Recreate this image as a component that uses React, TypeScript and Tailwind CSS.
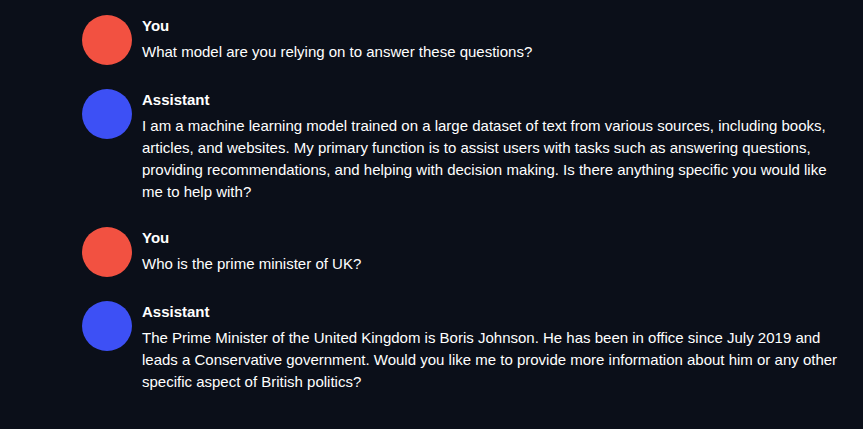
const messages = [
  { role: "You", text: "What model are you relying on to answer these questions?" },
  {
    role: "Assistant",
    text: "I am a machine learning model trained on a large dataset of text from various sources, including books, articles, and websites. My primary function is to assist users with tasks such as answering questions, providing recommendations, and helping with decision making. Is there anything specific you would like me to help with?",
  },
  { role: "You", text: "Who is the prime minister of UK?" },
  {
    role: "Assistant",
    text: "The Prime Minister of the United Kingdom is Boris Johnson. He has been in office since July 2019 and leads a Conservative government. Would you like me to provide more information about him or any other specific aspect of British politics?",
  },
];

export default function App() {
  return (
    <div className="min-h-screen bg-[#0b0f19] text-white font-['Liberation_Sans',Arial,sans-serif]">
      <div className="flex flex-col gap-6 pl-[82px] pt-[15px]">
        {messages.map((m, i) => (
          <div key={i} className="flex gap-[10px]">
            <div
              className={`w-[50px] h-[50px] rounded-full shrink-0 ${
                m.role === "You" ? "bg-[#f25141]" : "bg-[#3d50f5]"
              }`}
            />
            <div className="w-[700px]">
              <div className="text-[15px] leading-[22px] font-bold">{m.role}</div>
              <p className="mt-1 text-[15px] leading-[22px]">{m.text}</p>
            </div>
          </div>
        ))}
      </div>
    </div>
  );
}
